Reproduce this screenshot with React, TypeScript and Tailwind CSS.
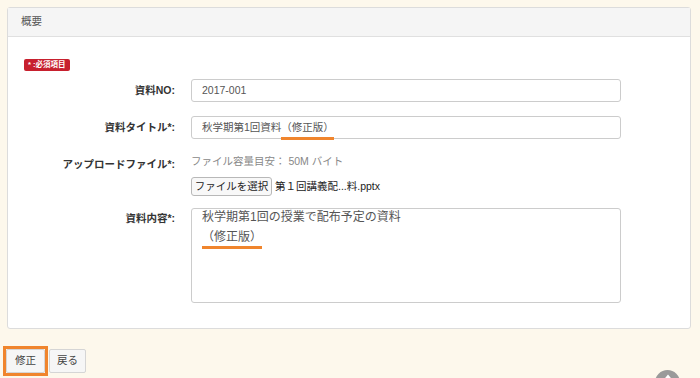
const font = "font-['Liberation_Sans','Noto_Sans_CJK_JP',sans-serif]";

const Label = ({ children, top }: { children: React.ReactNode; top?: boolean }) => (
  <div
    className={`w-[167px] shrink-0 text-right text-[10.5px] font-bold text-[#333] ${
      top ? "self-start pt-[3px]" : ""
    }`}
  >
    {children}
  </div>
);

const Mark = ({ children }: { children: React.ReactNode }) => (
  <span className="relative inline-block">
    {children}
    <span className="absolute left-0 right-0 -bottom-[5px] h-[3px] bg-[#f0852d]" />
  </span>
);

export default function App() {
  return (
    <div className={`relative h-[378px] w-[700px] overflow-hidden bg-[#fdf8ec] pt-[7px] pl-[7px] ${font}`}>
      <div className="w-[684px] rounded-[3px] border border-[#dcdcdc] bg-white">
        <div className="flex h-[29px] items-center border-b border-[#e0e0e0] bg-[#f5f5f5] px-[13px] text-[10.5px] text-[#555]">
          概要
        </div>
        <div className="pt-[22px] pb-[25px]">
          <div className="ml-[16px] flex h-[12px] w-fit items-center rounded-[2px] bg-[#c7202e] px-[4px] text-[7.5px] font-bold leading-none text-white">
            * :必須項目
          </div>

          <div className="mt-[8px] flex items-center gap-[16px]">
            <Label>資料NO:</Label>
            <div className="flex h-[23px] w-[430px] items-center rounded-[3px] border border-[#cccccc] px-[10px] text-[10.5px] text-[#555]">
              2017-001
            </div>
          </div>

          <div className="mt-[14px] flex items-center gap-[16px]">
            <Label>資料タイトル*:</Label>
            <div className="flex h-[23px] w-[430px] items-center rounded-[3px] border border-[#cccccc] px-[10px] text-[10.5px] text-[#555]">
              秋学期第1回資料<Mark>（修正版）</Mark>
            </div>
          </div>

          <div className="mt-[15px] flex gap-[16px]">
            <Label top>アップロードファイル*:</Label>
            <div className="flex flex-col">
              <div className="h-[14px] text-[10.5px] leading-[14px] text-[#888]">
                ファイル容量目安： 50M バイト
              </div>
              <div className="mt-[9px] flex items-center gap-[3px] text-[10.5px] text-[#222]">
                <div className="flex h-[19px] w-[81px] items-center justify-center rounded-[3px] border border-[#b8b8b8] bg-[#f8f8f8] text-[10.5px] text-[#222]">
                  ファイルを選択
                </div>
                <span>第１回講義配...料.pptx</span>
              </div>
            </div>
          </div>

          <div className="mt-[12px] flex gap-[16px]">
            <Label top>資料内容*:</Label>
            <div className="h-[95px] w-[430px] rounded-[3px] border border-[#cccccc] px-[10px] pt-[1px] text-[12px] text-[#555]">
              <div className="leading-[14px]">秋学期第1回の授業で配布予定の資料</div>
              <div className="mt-[6px] leading-[14px]">
                <Mark>（修正版）</Mark>
              </div>
            </div>
          </div>
        </div>
      </div>

      <div className="mt-[17px] flex items-center gap-[1px]">
        <div className="ml-[-4px] border-[3px] border-[#f0852d]">
          <div className="flex h-[24px] w-[39px] items-center justify-center rounded-[2px] border border-[#d5d5d5] bg-[#f6f6f6] text-[10.5px] text-[#444]">
            修正
          </div>
        </div>
        <div className="flex h-[24px] w-[37px] items-center justify-center rounded-[2px] border border-[#d5d5d5] bg-[#f6f6f6] text-[10.5px] text-[#444]">
          戻る
        </div>
      </div>

      <div className="absolute left-[655px] top-[370px] flex h-[25px] w-[25px] items-start justify-center rounded-full bg-[#9a9a9a] pt-[4px]">
        <svg width="10" height="8" viewBox="0 0 10 8">
          <path d="M1 7 L5 2 L9 7" stroke="white" strokeWidth="2" fill="none" />
        </svg>
      </div>
    </div>
  );
}
